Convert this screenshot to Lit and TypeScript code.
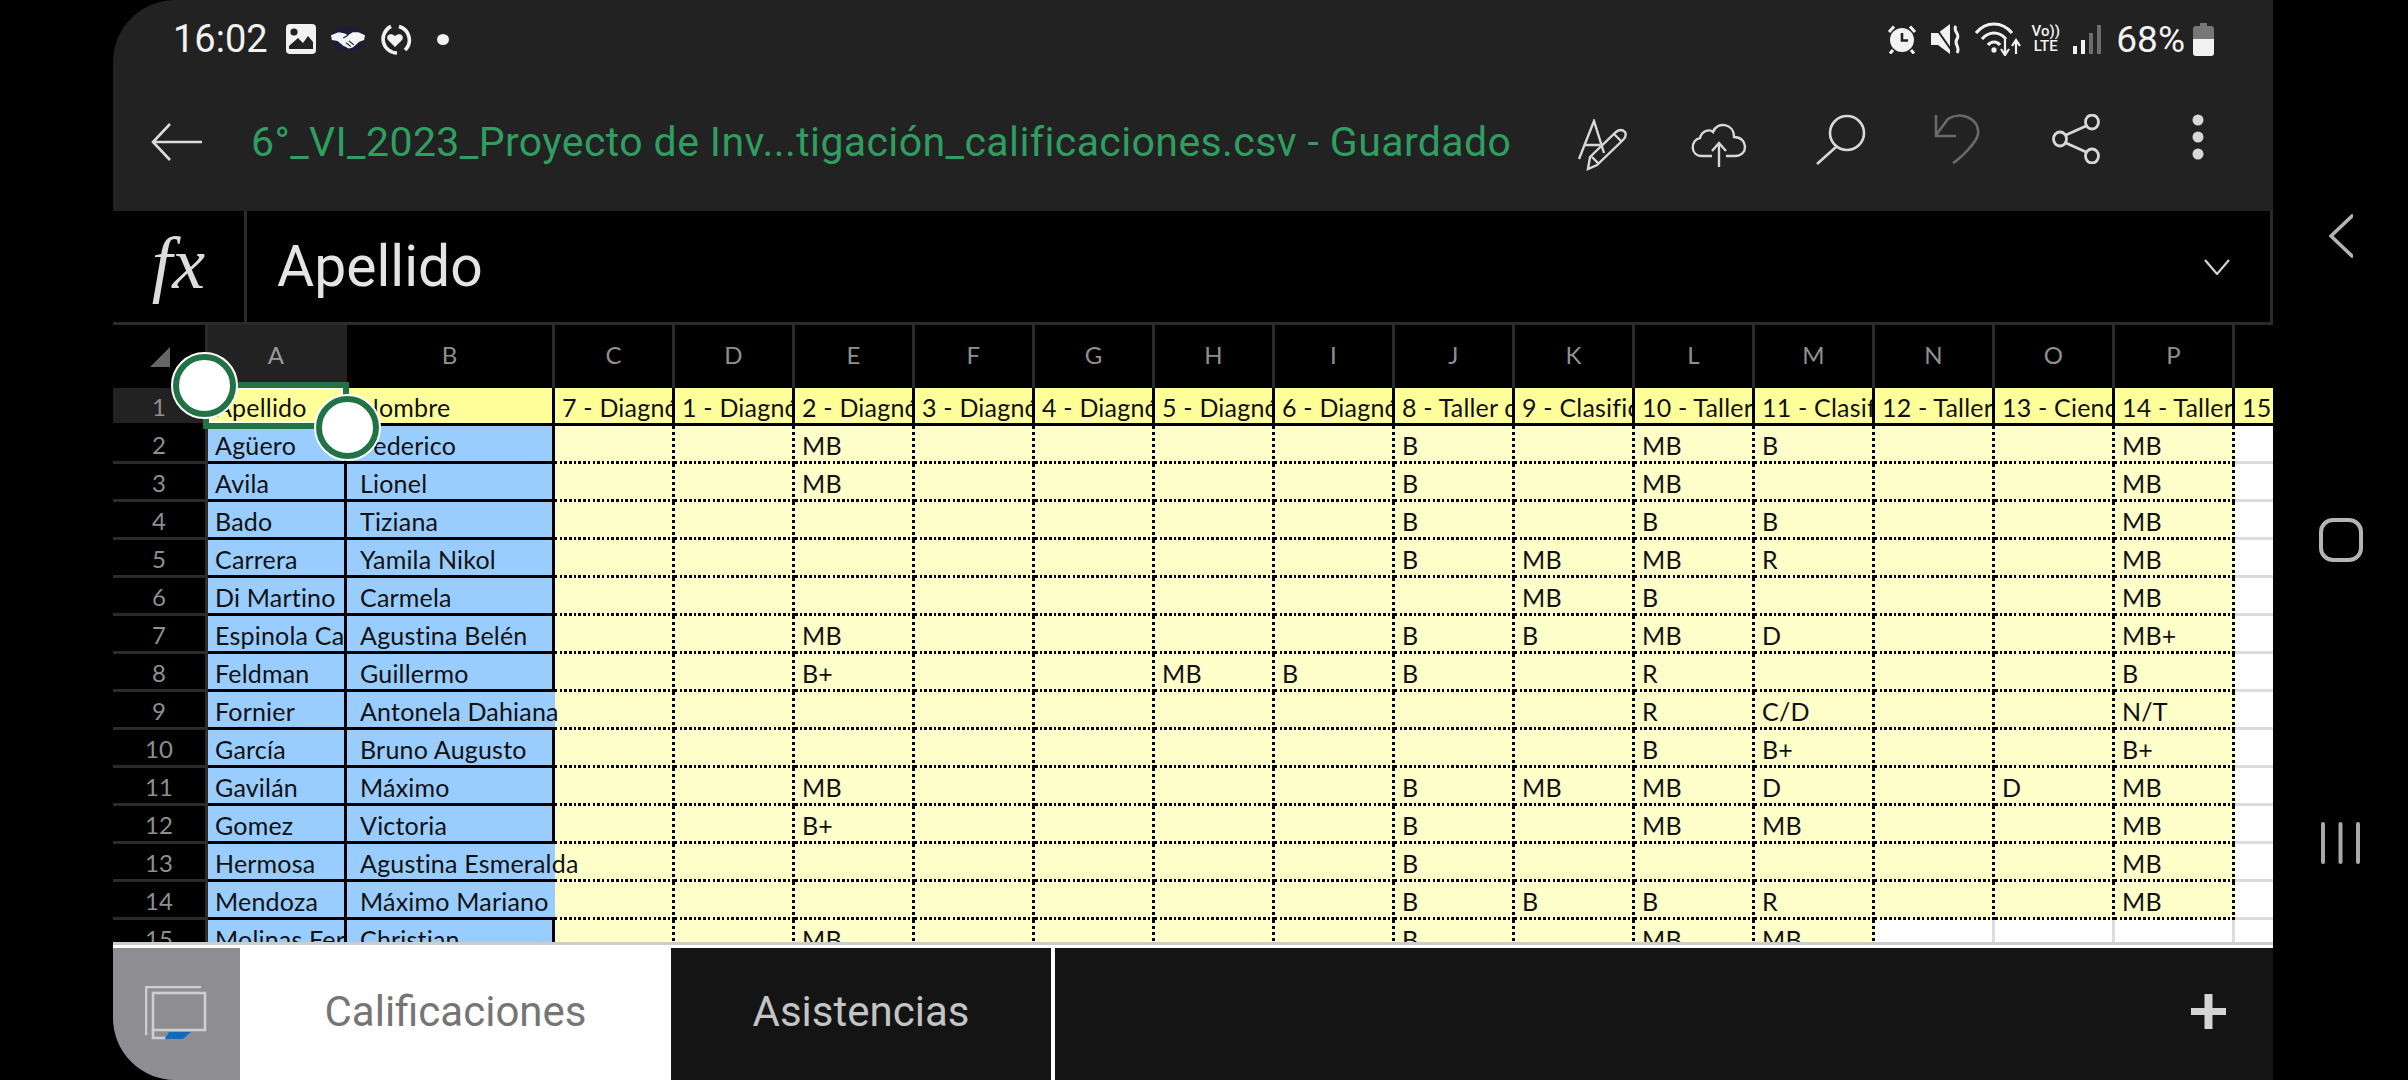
import { LitElement, html, css } from 'lit';
import { customElement } from 'lit/decorators.js';

const COLS = 'CDEFGHIJKLMNOP'.split('');

const HEADS = [
  '7 - Diagnóstico', '1 - Diagnóstico', '2 - Diagnóstico', '3 - Diagnóstico', '4 - Diagnóstico',
  '5 - Diagnóstico', '6 - Diagnóstico', '8 - Taller de', '9 - Clasificación', '10 - Taller de',
  '11 - Clasificación', '12 - Taller de', '13 - Ciencias', '14 - Taller de',
];

type Row = { a: string; b: string; spill?: boolean; g: Record<string, string> };

const ROWS: Row[] = [
  { a: 'Agüero', b: 'Federico', g: { E: 'MB', J: 'B', L: 'MB', M: 'B', P: 'MB' } },
  { a: 'Avila', b: 'Lionel', g: { E: 'MB', J: 'B', L: 'MB', P: 'MB' } },
  { a: 'Bado', b: 'Tiziana', g: { J: 'B', L: 'B', M: 'B', P: 'MB' } },
  { a: 'Carrera', b: 'Yamila Nikol', g: { J: 'B', K: 'MB', L: 'MB', M: 'R', P: 'MB' } },
  { a: 'Di Martino', b: 'Carmela', g: { K: 'MB', L: 'B', P: 'MB' } },
  { a: 'Espinola Cabrera', b: 'Agustina Belén', g: { E: 'MB', J: 'B', K: 'B', L: 'MB', M: 'D', P: 'MB+' } },
  { a: 'Feldman', b: 'Guillermo', g: { E: 'B+', H: 'MB', I: 'B', J: 'B', L: 'R', P: 'B' } },
  { a: 'Fornier', b: 'Antonela Dahiana', spill: true, g: { L: 'R', M: 'C/D', P: 'N/T' } },
  { a: 'García', b: 'Bruno Augusto', g: { L: 'B', M: 'B+', P: 'B+' } },
  { a: 'Gavilán', b: 'Máximo', g: { E: 'MB', J: 'B', K: 'MB', L: 'MB', M: 'D', O: 'D', P: 'MB' } },
  { a: 'Gomez', b: 'Victoria', g: { E: 'B+', J: 'B', L: 'MB', M: 'MB', P: 'MB' } },
  { a: 'Hermosa', b: 'Agustina Esmeralda', spill: true, g: { J: 'B', P: 'MB' } },
  { a: 'Mendoza', b: 'Máximo Mariano', spill: true, g: { J: 'B', K: 'B', L: 'B', M: 'R', P: 'MB' } },
  { a: 'Molinas Fernández', b: 'Christian', g: { E: 'MB', J: 'B', L: 'MB', M: 'MB' } },
];

@customElement('app-root')
export class AppRoot extends LitElement {
  static styles = css`
    :host {
      display: block;
      width: 2408px;
      height: 1080px;
      background: #000;
      overflow: hidden;
    }
    svg { display: block; flex: none; }

    .page { display: flex; height: 1080px; padding-left: 113px; box-sizing: border-box; }
    .screen {
      width: 2160px;
      height: 1080px;
      display: flex;
      flex-direction: column;
      border-radius: 62px 0 0 62px;
      overflow: hidden;
      font-family: Roboto, sans-serif;
    }

    .top { height: 211px; background: #222; flex: none; }
    .status {
      height: 78px;
      display: flex;
      align-items: center;
      padding: 0 59px 0 60px;
      color: #f2f2f2;
    }
    .clock { font-size: 38px; width: 112px; }
    .status-left { display: flex; align-items: center; }
    .status-right { display: flex; align-items: center; margin-left: auto; }
    .percent { font-size: 37px; margin: 0 8px 0 15px; }
    .volte {
      font-size: 15px;
      line-height: 15px;
      width: 31px;
      margin: 0 12px 0 9px;
      text-align: center;
      font-weight: 500;
    }
    .ic-hands { margin-left: 13px; }
    .ic-heart { margin-left: 12px; }
    .ic-dot { margin-left: 25px; }
    .ic-mute { margin-left: 14px; }
    .ic-wifi { margin-left: 13px; }

    .appbar { height: 128px; display: flex; align-items: center; padding-left: 38px; }
    .title {
      color: #2f9e60;
      font-size: 41px;
      letter-spacing: 0.4px;
      margin-left: 48px;
      white-space: nowrap;
      width: 1292px;
    }
    .actions { display: flex; }
    .action { width: 119px; display: flex; justify-content: center; }
    .ic-pen { margin-top: 5px; }
    .ic-cloud { margin: 9px 6px 0 0; }
    .ic-undo { margin-right: 6px; }
    .ic-share { margin-right: 5px; }

    .formula {
      height: 114px;
      flex: none;
      background: #000;
      display: flex;
      align-items: center;
      border-bottom: 3px solid #2b2b2b;
      border-right: 3px solid #2b2b2b;
      box-sizing: border-box;
      color: #e4e4e4;
    }
    .fx {
      width: 134px;
      height: 111px;
      border-right: 3px solid #2b2b2b;
      box-sizing: border-box;
      font: italic 74px "Liberation Serif", serif;
      line-height: 104px;
      text-align: center;
      color: #dcdcdc;
    }
    .value { font-size: 57px; margin-left: 30px; flex: 1; }
    .more { margin-right: 40px; }

    .sheet {
      position: relative;
      height: 617px;
      flex: none;
      overflow: hidden;
      background: #fff;
      display: grid;
      grid-template-columns: 95px 139px 208px repeat(14, 120px) 38px;
      grid-template-rows: 63px repeat(15, 38px);
      font-family: Lato, sans-serif;
      font-size: 25px;
      letter-spacing: 0.2px;
      color: #111;
    }
    .cell {
      box-sizing: border-box;
      white-space: nowrap;
      overflow: hidden;
      padding: 3px 0 0 7px;
      line-height: 32px;
      height: 38px;
    }
    .corner, .colhead, .rowhead { background: #000; color: #8f8f8f; box-sizing: border-box; }
    .corner {
      height: 63px;
      border-right: 3px solid #2b2b2b;
      display: flex;
      padding: 22px 0 0 37px;
    }
    .colhead {
      height: 63px;
      border-right: 3px solid #2b2b2b;
      text-align: center;
      line-height: 60px;
      font-size: 24px;
    }
    .colhead.active { background: #222; border-right-color: #222; color: #9a9a9a; }
    .colhead.end { border-right: 0; }
    .rowhead {
      height: 38px;
      border-right: 3px solid #2b2b2b;
      border-bottom: 3px solid #2b2b2b;
      text-align: center;
      font-size: 24px;
      line-height: 38px;
    }
    .rowhead.active { background: #222; border-bottom-color: #000; }

    .head { background: #ffff99; border-right: 3px solid #000; border-bottom: 3px solid #000; }
    .name { background: #99ccff; border-right: 3px solid #000; border-bottom: 3px solid #000; }
    .indent { padding-left: 13px; }
    .spill { overflow: visible; border-right: 0; z-index: 2; }
    .grade {
      background-color: #ffffc9;
      background-image:
        repeating-linear-gradient(90deg, #000 0 2.5px, transparent 2.5px 4.7px),
        repeating-linear-gradient(180deg, #000 0 3px, transparent 3px 6px);
      background-size: 100% 3px, 3px 100%;
      background-position: 0 100%, 100% 0;
      background-repeat: no-repeat;
    }
    .blank { background: #fff; border-right: 3px solid #dcdcdc; border-bottom: 3px solid #dcdcdc; }
    .blank.end { border-right: 0; }
    .head.end { border-right: 0; }

    .selection {
      position: absolute;
      left: 90px;
      top: 57px;
      width: 146px;
      height: 47px;
      box-sizing: border-box;
      border: 6px solid #217346;
      box-shadow: inset 0 0 0 1.5px #fff;
      z-index: 3;
    }
    .handle {
      position: absolute;
      width: 65px;
      height: 65px;
      box-sizing: border-box;
      background: #fff;
      border: 7px solid #217346;
      outline: 2px solid #fff;
      outline-offset: -1px;
      border-radius: 50%;
      z-index: 4;
    }
    .h1 { left: 59px; top: 28px; }
    .h2 { left: 202px; top: 70px; }

    .rule { height: 3px; background: #cccccc; flex: none; }
    .gap { height: 3px; background: #fff; flex: none; }

    .tabs { height: 132px; flex: none; display: flex; background: #141414; }
    .sheets-btn {
      width: 127px;
      background: #8e8d91;
      display: flex;
      justify-content: center;
      padding: 38px 2px 0 0;
      box-sizing: border-box;
    }
    .tab {
      display: flex;
      align-items: center;
      justify-content: center;
      font-size: 42px;
      padding-bottom: 6px;
      box-sizing: border-box;
    }
    .tab.on { width: 431px; background: #fff; color: #757575; }
    .tab.off { width: 384px; color: #c4c4c4; border-right: 4px solid #fff; }
    .add { margin: -6px 47px 0 auto; align-self: center; }

    .nav {
      width: 135px;
      display: flex;
      flex-direction: column;
      align-items: center;
      padding-top: 214px;
      gap: 260px;
      box-sizing: border-box;
    }
  `;

  private statusLeft() {
    return html`
      <div class="status-left">
        <span class="clock">16:02</span>
        <svg width="32" height="32" viewBox="0 0 32 32">
          <rect x="1" y="1" width="30" height="30" rx="4" fill="#f2f2f2"/>
          <circle cx="9" cy="9" r="3.6" fill="#222"/>
          <path d="M4 23 L13 15 L18 20 L23 13 L28 19 V26 H4 Z" fill="#222"/>
        </svg>
        <svg class="ic-hands" width="36" height="28" viewBox="0 0 38 28">
          <ellipse cx="19" cy="14" rx="18" ry="13" fill="#1d1d3a"/>
          <path d="M1 10 L9 7 L15 8 L19 10 L24 7 L30 7 L37 10 L36 15 L31 17 L24 23 L20 24 L14 21 L8 16 L2 15 Z" fill="#f4f4f4"/>
          <path d="M14 13 L19 10 M20 16 L25 20 M17 18 L22 22" stroke="#1d1d3a" stroke-width="1.2" fill="none"/>
        </svg>
        <svg class="ic-heart" width="34" height="33" viewBox="0 0 34 33">
          <path d="M21 3.4 A14 14 0 0 1 27 27 M19 30 A14 14 0 0 1 13 3.4" fill="none" stroke="#f2f2f2" stroke-width="3.6"/>
          <path d="M17 24 L10 17 C7 12 13 9 17 13 C21 9 27 12 24 17 Z" fill="#f2f2f2"/>
        </svg>
        <svg class="ic-dot" width="12" height="11" viewBox="0 0 12 11">
          <ellipse cx="6" cy="5.5" rx="6" ry="5.5" fill="#f2f2f2"/>
        </svg>
      </div>`;
  }

  private statusRight() {
    return html`
      <div class="status-right">
        <svg width="30" height="29" viewBox="0 0 30 29">
          <circle cx="15" cy="15" r="12" fill="#f2f2f2"/>
          <path d="M15 8 V15.5 H21" fill="none" stroke="#222" stroke-width="2.6"/>
          <path d="M2 7 L7 1.5 M28 7 L23 1.5 M6 25 L3 28.5 M24 25 L27 28.5" stroke="#f2f2f2" stroke-width="3"/>
        </svg>
        <svg class="ic-mute" width="31" height="30" viewBox="0 0 31 30">
          <path d="M0 9 H7 L19 0 V30 L7 21 H0 Z" fill="#f2f2f2"/>
          <path d="M2 0 L21 27" stroke="#222" stroke-width="2"/>
          <path d="M25 2 C21 7 30 10 26 15 C22 20 30 23 26 29" fill="none" stroke="#f2f2f2" stroke-width="3"/>
        </svg>
        <svg class="ic-wifi" width="46" height="34" viewBox="0 0 46 34">
          <path d="M1 11 C11 -1 27 -1 37 11 M7 17 C14 9 24 9 31 17 M13 23 C16 19 22 19 25 23" fill="none" stroke="#f2f2f2" stroke-width="3.2"/>
          <ellipse cx="19" cy="28" rx="2.6" ry="2.8" fill="#f2f2f2"/>
          <path d="M30 17 V32 M26 27 L30 33 L34 27 M41 32 V19 M37 24 L41 18 L45 24" fill="none" stroke="#f2f2f2" stroke-width="2.2"/>
        </svg>
        <div class="volte">Vo))<br />LTE</div>
        <svg width="28" height="29" viewBox="0 0 28 29">
          <rect x="0" y="21" width="4" height="8" fill="#f2f2f2"/>
          <rect x="8" y="15" width="4" height="14" fill="#f2f2f2"/>
          <rect x="16" y="8" width="4" height="21" fill="#6d6d6d"/>
          <rect x="24" y="0" width="4" height="29" fill="#6d6d6d"/>
        </svg>
        <span class="percent">68%</span>
        <svg width="21" height="33" viewBox="0 0 21 33">
          <path d="M7 0 H14 V3 H18 Q21 3 21 6 V16 H0 V6 Q0 3 3 3 H7 Z" fill="#777"/>
          <path d="M0 16 H21 V30 Q21 33 18 33 H3 Q0 33 0 30 Z" fill="#f2f2f2"/>
        </svg>
      </div>`;
  }

  private actions() {
    const c = '#d8d8d8';
    return html`
      <div class="actions">
        <div class="action">
          <svg class="ic-pen" width="50" height="52" viewBox="0 0 50 52" fill="none" stroke=${c} stroke-width="2.4">
            <path d="M1 40 L16 2 L26 34 M7 26 H22"/>
            <path d="M10 50 L12 38 L38 13 Q43 9 47 13 Q49 17 45 21 L19 46 Z M14 38 L20 44 M36 15 L43 22"/>
          </svg>
        </div>
        <div class="action">
          <svg class="ic-cloud" width="56" height="44" viewBox="0 0 56 44" fill="none" stroke=${c} stroke-width="2.4">
            <path d="M21 33 H11 C-1 33 -1 17 9 15 C11 7 19 6 22 9 C26 -2 43 0 43 14 C57 14 58 33 44 33 H35"/>
            <path d="M28 44 V20 M21 28 L28 20 L35 28"/>
          </svg>
        </div>
        <div class="action">
          <svg width="50" height="51" viewBox="0 0 50 51" fill="none" stroke=${c} stroke-width="2.6">
            <ellipse cx="31" cy="19" rx="17" ry="17"/>
            <path d="M20 33 L1 50"/>
          </svg>
        </div>
        <div class="action">
          <svg class="ic-undo" width="46" height="50" viewBox="0 0 46 50" fill="none" stroke="#6a6a6a" stroke-width="2.6">
            <path d="M2 1 V22 H22"/>
            <path d="M2 21 L14 5 C26 -3 46 4 44 20 C43 28 27 44 19 49"/>
          </svg>
        </div>
        <div class="action">
          <svg class="ic-share" width="48" height="50" viewBox="0 0 48 50" fill="none" stroke=${c} stroke-width="2.8">
            <ellipse cx="8" cy="25" rx="6.5" ry="7"/>
            <ellipse cx="40" cy="8" rx="6.5" ry="7"/>
            <ellipse cx="40" cy="42" rx="6.5" ry="7"/>
            <path d="M14 21 L34 12 M14 29 L34 38"/>
          </svg>
        </div>
        <div class="action">
          <svg width="12" height="46" viewBox="0 0 12 46" fill=${c}>
            <ellipse cx="6" cy="6" rx="5.5" ry="5.5"/>
            <ellipse cx="6" cy="23" rx="5.5" ry="5.5"/>
            <ellipse cx="6" cy="40" rx="5.5" ry="5.5"/>
          </svg>
        </div>
      </div>`;
  }

  private sheet() {
    return html`
      <div class="sheet">
        <div class="corner">
          <svg width="20" height="20" viewBox="0 0 20 20"><path d="M20 0 V20 H0 Z" fill="#666"/></svg>
        </div>
        <div class="colhead active">A</div>
        <div class="colhead">B</div>
        ${COLS.map((c) => html`<div class="colhead">${c}</div>`)}
        <div class="colhead end"></div>

        <div class="rowhead active">1</div>
        <div class="cell head">Apellido</div>
        <div class="cell head indent">Nombre</div>
        ${HEADS.map((h) => html`<div class="cell head">${h}</div>`)}
        <div class="cell head end">15</div>

        ${ROWS.map((r, i) => html`
          <div class="rowhead">${i + 2}</div>
          <div class="cell name">${r.a}</div>
          <div class="cell name indent ${r.spill ? 'spill' : ''}">${r.b}</div>
          ${COLS.map((c) => {
            const white = i === 13 && c > 'M';
            return html`<div class="cell ${white ? 'blank' : 'grade'}">${r.g[c] ?? ''}</div>`;
          })}
          <div class="cell blank end"></div>
        `)}

        <div class="selection"></div>
        <div class="handle h1"></div>
        <div class="handle h2"></div>
      </div>`;
  }

  render() {
    return html`
      <div class="page">
        <div class="screen">
          <div class="top">
            <div class="status">${this.statusLeft()}${this.statusRight()}</div>
            <div class="appbar">
              <svg width="52" height="38" viewBox="0 0 52 38" fill="none" stroke="#dcdcdc" stroke-width="2.6">
                <path d="M51 19 H2 M19 1 L2 19 L19 37"/>
              </svg>
              <div class="title">6°_VI_2023_Proyecto de Inv...tigación_calificaciones.csv - Guardado</div>
              ${this.actions()}
            </div>
          </div>
          <div class="formula">
            <div class="fx">fx</div>
            <div class="value">Apellido</div>
            <svg class="more" width="26" height="16" viewBox="0 0 26 16" fill="none" stroke="#d0d0d0" stroke-width="2.2">
              <path d="M1 1 L13 15 L25 1"/>
            </svg>
          </div>
          ${this.sheet()}
          <div class="rule"></div>
          <div class="gap"></div>
          <div class="tabs">
            <div class="sheets-btn">
              <svg width="62" height="54" viewBox="0 0 62 54" fill="none">
                <path d="M1 49 V1 H56" stroke="#cfcfcf" stroke-width="2.6"/>
                <rect x="8" y="7" width="52" height="37" stroke="#cfcfcf" stroke-width="2.6"/>
                <path d="M8 44 V52 H20" stroke="#cfcfcf" stroke-width="2.6"/>
                <path d="M24 46 H46 L38 53 H20 Z" fill="#0f6cbd"/>
              </svg>
            </div>
            <div class="tab on">Calificaciones</div>
            <div class="tab off">Asistencias</div>
            <svg class="add" width="35" height="35" viewBox="0 0 35 35" fill="#d4d4d4">
              <rect x="13.5" y="0" width="8" height="35"/>
              <rect x="0" y="14" width="35" height="7"/>
            </svg>
          </div>
        </div>
        <div class="nav">
          <svg width="24" height="44" viewBox="0 0 24 44" fill="none" stroke="#b4b4b4" stroke-width="3.6" stroke-linecap="round">
            <path d="M23 2 L2 22 L23 42"/>
          </svg>
          <svg width="44" height="44" viewBox="0 0 44 44" fill="none" stroke="#b4b4b4" stroke-width="4">
            <rect x="2" y="2" width="40" height="40" rx="12"/>
          </svg>
          <svg width="40" height="42" viewBox="0 0 40 42" fill="#a8a8a8">
            <rect x="0" y="0" width="4" height="42" rx="2"/>
            <rect x="17.5" y="0" width="4" height="42" rx="2"/>
            <rect x="35" y="0" width="4" height="42" rx="2"/>
          </svg>
        </div>
      </div>
    `;
  }
}
